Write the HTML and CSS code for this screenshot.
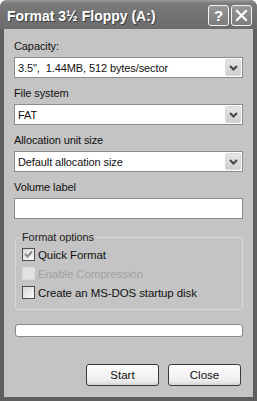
FILE: index.html
```html
<!DOCTYPE html>
<html lang="en">
<head>
  <meta charset="UTF-8">
  <title>Format 3½ Floppy (A:)</title>
  <link rel="stylesheet" href="styles.css">
</head>
<body>
  <div class="window">
    <div class="titlebar">
      <span class="title">Format 3½ Floppy (A:)</span>
      <div class="caption-btns">
        <span class="cap-btn">?</span>
        <span class="cap-btn">
          <svg width="13" height="13" viewBox="0 0 13 13"><path d="M2 2 L11 11 M11 2 L2 11" stroke="#fff" stroke-width="2.2" stroke-linecap="square"/></svg>
        </span>
      </div>
    </div>

    <div class="client">
      <div class="field">
        <label>Capacity:</label>
        <div class="combo">
          <span class="combo-text">3.5",&nbsp; 1.44MB, 512 bytes/sector</span>
          <span class="combo-btn"><svg width="9" height="6" viewBox="0 0 9 6"><path d="M1 1 L4.5 4.5 L8 1" fill="none" stroke="#444" stroke-width="2"/></svg></span>
        </div>
      </div>

      <div class="field">
        <label>File system</label>
        <div class="combo">
          <span class="combo-text">FAT</span>
          <span class="combo-btn"><svg width="9" height="6" viewBox="0 0 9 6"><path d="M1 1 L4.5 4.5 L8 1" fill="none" stroke="#444" stroke-width="2"/></svg></span>
        </div>
      </div>

      <div class="field">
        <label>Allocation unit size</label>
        <div class="combo">
          <span class="combo-text">Default allocation size</span>
          <span class="combo-btn"><svg width="9" height="6" viewBox="0 0 9 6"><path d="M1 1 L4.5 4.5 L8 1" fill="none" stroke="#444" stroke-width="2"/></svg></span>
        </div>
      </div>

      <div class="field">
        <label>Volume label</label>
        <div class="textbox"></div>
      </div>

      <fieldset class="options">
        <legend>Format options</legend>
        <div class="check-row">
          <span class="check checked"><svg width="9" height="9" viewBox="0 0 9 9"><path d="M1 4 L3.5 6.5 L8 1.5" fill="none" stroke="#8a8a8a" stroke-width="2"/></svg></span>
          <span>Quick Format</span>
        </div>
        <div class="check-row disabled">
          <span class="check"></span>
          <span>Enable Compression</span>
        </div>
        <div class="check-row">
          <span class="check"></span>
          <span>Create an MS-DOS startup disk</span>
        </div>
      </fieldset>

      <div class="progress"></div>

      <div class="buttons">
        <button class="btn">Start</button>
        <button class="btn">Close</button>
      </div>
    </div>
  </div>
</body>
</html>
```

FILE: styles.css
```css
* { margin: 0; padding: 0; box-sizing: border-box; }
body {
  background: #fff;
  font-family: "Liberation Sans", Arial, sans-serif;
  font-size: 11px;
  letter-spacing: -0.1px;
  color: #111;
}
.window {
  width: 257px;
  height: 401px;
  display: flex;
  flex-direction: column;
  background: #5e5e5e;
  border-radius: 7px 7px 0 0;
  overflow: hidden;
}
.titlebar {
  height: 29px;
  display: flex;
  align-items: center;
  justify-content: space-between;
  padding: 0 5px 0 7px;
  background: linear-gradient(#8e8e8e 0, #7a7a7a 3px, #727272 50%, #6c6c6c 100%);
  border-top: 1px solid #9a9a9a;
}
.title {
  color: #fff;
  font-weight: bold;
  font-size: 14px;
  letter-spacing: 0;
  text-shadow: 1px 1px 0 #3c3c3c;
  padding-top: 1px;
}
.caption-btns { display: flex; gap: 2px; }
.cap-btn {
  width: 21px;
  height: 21px;
  border: 1px solid #f2f2f2;
  border-radius: 3px;
  background: linear-gradient(#989898, #7c7c7c);
  color: #fff;
  font-weight: bold;
  font-size: 15px;
  display: flex;
  align-items: center;
  justify-content: center;
}
.client {
  flex: 1;
  margin: 0 4px 4px 4px;
  background: #c4c4c4;
  padding: 10px 10px 11px 10px;
  display: flex;
  flex-direction: column;
}
.field { margin-bottom: 8px; }
.field label {
  display: block;
  line-height: 14px;
  margin-bottom: 4px;
}
.combo {
  height: 21px;
  background: #fff;
  border: 1px solid #8c8c8c;
  display: flex;
  align-items: center;
  justify-content: space-between;
  padding: 1px 1px 1px 3px;
}
.combo-btn {
  width: 16px;
  height: 17px;
  background: linear-gradient(#e6e6e6, #cfcfcf);
  border: 1px solid #d8d8d8;
  border-radius: 2px;
  display: flex;
  align-items: center;
  justify-content: center;
}
.textbox {
  height: 21px;
  background: #fff;
  border: 1px solid #8c8c8c;
}
.options {
  border: 1px solid #dadada;
  border-radius: 4px;
  margin: 4px 0 0 1px;
  padding: 2px 6px 7px 6px;
}
.options legend {
  padding: 0 2px;
  margin-left: -2px;
  color: #222;
}
.check-row {
  display: flex;
  align-items: center;
  gap: 3px;
  height: 19px;
  font-size: 11.5px;
}
.check {
  width: 13px;
  height: 13px;
  border: 1px solid #4c4c4c;
  background: linear-gradient(135deg, #d6d6d6, #fafafa);
  display: flex;
  align-items: center;
  justify-content: center;
}
.check-row.disabled { color: #a2a2a2; }
.check-row.disabled .check {
  border-color: #d8d8d8;
  background: #e2e2e2;
}
.progress {
  margin: 14px 0 0 1px;
  height: 13px;
  background: #fff;
  border: 1px solid #8a8a8a;
  border-radius: 3px;
}
.buttons {
  margin-top: auto;
  display: flex;
  justify-content: flex-end;
  gap: 9px;
  padding-right: 2px;
}
.btn {
  width: 73px;
  height: 22px;
  font-family: inherit;
  font-size: 11.5px;
  color: #111;
  border: 1px solid #3a3a3a;
  border-radius: 3px;
  background: linear-gradient(#ffffff, #ececec 80%, #d4d4d4);
}
```
